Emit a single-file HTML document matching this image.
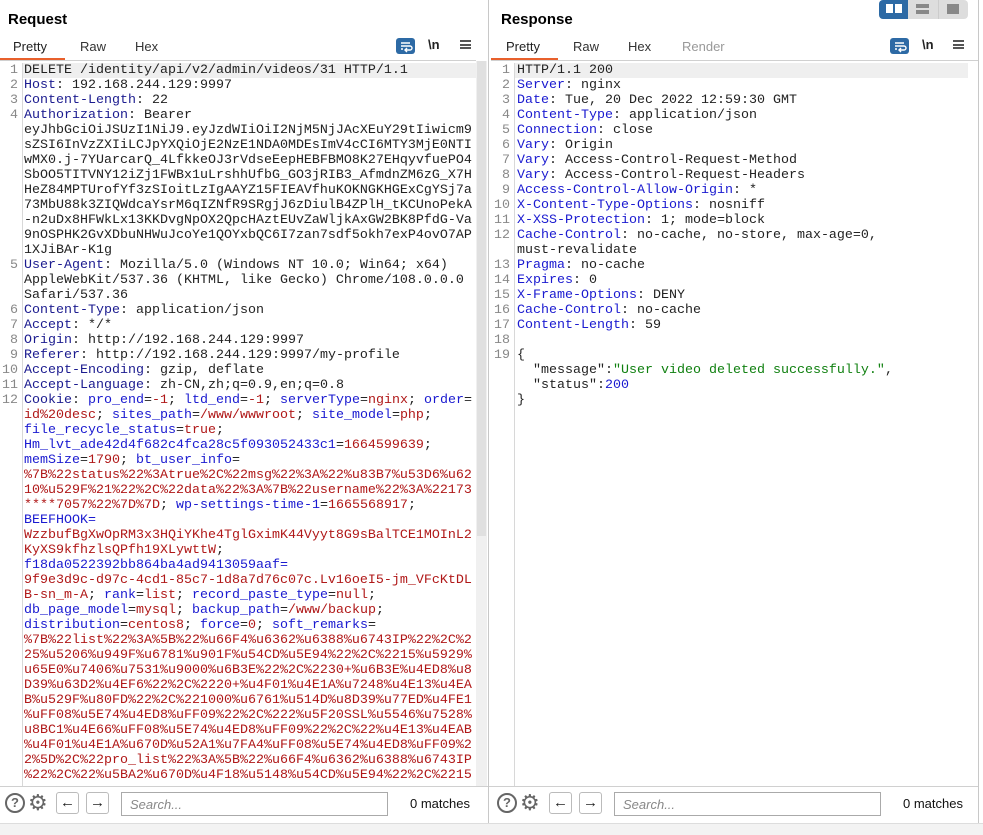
<!DOCTYPE html>
<html><head><meta charset="utf-8"><style>
*{margin:0;padding:0;box-sizing:border-box}
html,body{width:983px;height:835px;overflow:hidden}
body{background:#fff;font-family:"Liberation Sans",sans-serif;position:relative}
.title{position:absolute;top:11px;font-weight:bold;font-size:15px;color:#000}
.tab{position:absolute;top:39px;font-size:13px;color:#333}
.ul{position:absolute;top:58px;height:2px;background:#e8602c}
.sep{position:absolute;top:60px;height:1px;background:#d0d0d0}
.code{position:absolute;top:63px;height:723px;overflow:hidden;font-family:"Liberation Mono",monospace;font-size:13.33px;line-height:15px;color:#222}
.code div{height:15px;white-space:pre}
.gut{position:absolute;top:63px;font-family:"Liberation Mono",monospace;font-size:13.33px;line-height:15px;color:#888;text-align:right;white-space:pre}
.k{color:#1b1b8f}.n{color:#1a1ad0}.v{color:#b01818}.g{color:#108010}.b{color:#1a1ad0}
.vl{position:absolute;width:1px;background:#d8d8d8}
.hl{position:absolute;top:63px;height:15px;background:#efefef}
.icon{position:absolute;width:19px;height:16px;border-radius:3px;background:#2d6aa5;top:38px}
.nl{position:absolute;top:37px;font-size:13px;font-weight:bold;color:#222}
.menu{position:absolute;top:40px;width:11px;height:9px;border-top:2px solid #555;border-bottom:2px solid #555}
.menu:after{content:"";position:absolute;left:0;right:0;top:1.5px;height:2px;background:#555}
.bar{position:absolute;top:786px;height:37px;border-top:1px solid #d0d0d0;background:#fff}
.btn{position:absolute;top:792px;width:23px;height:22px;border:1px solid #bbb;border-radius:3px;font-size:15px;text-align:center;line-height:20px;color:#222}
.search{position:absolute;top:792px;height:24px;border:1px solid #aaa;font-style:italic;font-size:13px;color:#888;padding:4px 8px}
.m{position:absolute;top:796px;font-size:13px;color:#111}
.circ{position:absolute;top:793px;width:20px;height:20px;border:2px solid #666;border-radius:50%;font-size:13px;font-weight:bold;color:#666;text-align:center;line-height:16px}
</style></head><body>
<div class="title" style="left:8px">Request</div>
<div class="title" style="left:501px">Response</div>

<div style="position:absolute;left:879px;top:0;width:29px;height:19px;background:#2d6aa5;border-radius:4px 0 0 4px"></div>
<div style="position:absolute;left:886px;top:4px;width:7px;height:9px;background:#fff"></div>
<div style="position:absolute;left:895px;top:4px;width:7px;height:9px;background:#fff"></div>
<div style="position:absolute;left:908px;top:0;width:30px;height:19px;background:#ddd"></div>
<div style="position:absolute;left:916px;top:4px;width:13px;height:4px;background:#888"></div>
<div style="position:absolute;left:916px;top:10px;width:13px;height:4px;background:#888"></div>
<div style="position:absolute;left:938px;top:0;width:30px;height:19px;background:#ddd;border-radius:0 4px 4px 0;border-left:1px solid #ccc"></div>
<div style="position:absolute;left:947px;top:4px;width:12px;height:10px;background:#888"></div>

<div class="tab" style="left:13px;color:#222">Pretty</div>
<div class="tab" style="left:80px">Raw</div>
<div class="tab" style="left:135px">Hex</div>
<div class="ul" style="left:0;width:65px"></div>
<div class="sep" style="left:0;width:476px"></div>
<div class="icon" style="left:396px"><svg width="19" height="16"><path d="M5 5h9M5 8h9a2 2 0 0 1 0 4h-4M11 10l-2 2 2 2M5 11h2" stroke="#fff" stroke-width="1.4" fill="none"/></svg></div>
<div class="nl" style="left:428px">\n</div>
<div class="menu" style="left:460px"></div>

<div class="tab" style="left:506px;color:#222">Pretty</div>
<div class="tab" style="left:573px">Raw</div>
<div class="tab" style="left:628px">Hex</div>
<div class="tab" style="left:682px;color:#999">Render</div>
<div class="ul" style="left:491px;width:67px"></div>
<div class="sep" style="left:491px;width:487px"></div>
<div class="icon" style="left:890px"><svg width="19" height="16"><path d="M5 5h9M5 8h9a2 2 0 0 1 0 4h-4M11 10l-2 2 2 2M5 11h2" stroke="#fff" stroke-width="1.4" fill="none"/></svg></div>
<div class="nl" style="left:922px">\n</div>
<div class="menu" style="left:953px"></div>

<div class="vl" style="left:488px;top:0;height:823px;background:#c8c8c8"></div>
<div class="vl" style="left:978px;top:0;height:823px;background:#c8c8c8"></div>
<div class="vl" style="left:22px;top:63px;height:723px"></div>
<div class="vl" style="left:514px;top:63px;height:723px"></div>
<div style="position:absolute;left:476px;top:61px;width:11px;height:725px;background:#f0f0f0"></div>
<div style="position:absolute;left:477px;top:61px;width:9px;height:475px;background:#e0e0e0"></div>
<div class="hl" style="left:23px;width:453px"></div>
<div class="hl" style="left:515px;width:453px"></div>

<div class="gut" style="left:0;width:18px">1
2
3
4









5


6
7
8
9
10
11
12</div>
<div class="code" style="left:24px;width:452px"><div>DELETE /identity/api/v2/admin/videos/31 HTTP/1.1</div><div><span class="k">Host</span>: 192.168.244.129:9997</div><div><span class="k">Content-Length</span>: 22</div><div><span class="k">Authorization</span>: Bearer</div><div>eyJhbGciOiJSUzI1NiJ9.eyJzdWIiOiI2NjM5NjJAcXEuY29tIiwicm9</div><div>sZSI6InVzZXIiLCJpYXQiOjE2NzE1NDA0MDEsImV4cCI6MTY3MjE0NTI</div><div>wMX0.j-7YUarcarQ_4LfkkeOJ3rVdseEepHEBFBMO8K27EHqyvfuePO4</div><div>SbOO5TITVNY12iZj1FWBx1uLrshhUfbG_GO3jRIB3_AfmdnZM6zG_X7H</div><div>HeZ84MPTUrofYf3zSIoitLzIgAAYZ15FIEAVfhuKOKNGKHGExCgYSj7a</div><div>73MbU88k3ZIQWdcaYsrM6qIZNfR9SRgjJ6zDiulB4ZPlH_tKCUnoPekA</div><div>-n2uDx8HFWkLx13KKDvgNpOX2QpcHAztEUvZaWljkAxGW2BK8PfdG-Va</div><div>9nOSPHK2GvXDbuNHWuJcoYe1QOYxbQC6I7zan7sdf5okh7exP4ovO7AP</div><div>1XJiBAr-K1g</div><div><span class="k">User-Agent</span>: Mozilla/5.0 (Windows NT 10.0; Win64; x64)</div><div>AppleWebKit/537.36 (KHTML, like Gecko) Chrome/108.0.0.0</div><div>Safari/537.36</div><div><span class="k">Content-Type</span>: application/json</div><div><span class="k">Accept</span>: */*</div><div><span class="k">Origin</span>: http://192.168.244.129:9997</div><div><span class="k">Referer</span>: http://192.168.244.129:9997/my-profile</div><div><span class="k">Accept-Encoding</span>: gzip, deflate</div><div><span class="k">Accept-Language</span>: zh-CN,zh;q=0.9,en;q=0.8</div><div><span class="k">Cookie</span>: <span class="n">pro_end</span>=<span class="v">-1</span>; <span class="n">ltd_end</span>=<span class="v">-1</span>; <span class="n">serverType</span>=<span class="v">nginx</span>; <span class="n">order</span>=</div><div><span class="v">id%20desc</span>; <span class="n">sites_path</span>=<span class="v">/www/wwwroot</span>; <span class="n">site_model</span>=<span class="v">php</span>;</div><div><span class="n">file_recycle_status</span>=<span class="v">true</span>;</div><div><span class="n">Hm_lvt_ade42d4f682c4fca28c5f093052433c1</span>=<span class="v">1664599639</span>;</div><div><span class="n">memSize</span>=<span class="v">1790</span>; <span class="n">bt_user_info</span>=</div><div class="v">%7B%22status%22%3Atrue%2C%22msg%22%3A%22%u83B7%u53D6%u62</div><div class="v">10%u529F%21%22%2C%22data%22%3A%7B%22username%22%3A%22173</div><div><span class="v">****7057%22%7D%7D</span>; <span class="n">wp-settings-time-1</span>=<span class="v">1665568917</span>;</div><div class="n">BEEFHOOK=</div><div><span class="v">WzzbufBgXwOpRM3x3HQiYKhe4TglGximK44Vyyt8G9sBalTCE1MOInL2</span></div><div><span class="v">KyXS9kfhzlsQPfh19XLywttW</span>;</div><div class="n">f18da0522392bb864ba4ad9413059aaf=</div><div class="v">9f9e3d9c-d97c-4cd1-85c7-1d8a7d76c07c.Lv16oeI5-jm_VFcKtDL</div><div><span class="v">B-sn_m-A</span>; <span class="n">rank</span>=<span class="v">list</span>; <span class="n">record_paste_type</span>=<span class="v">null</span>;</div><div><span class="n">db_page_model</span>=<span class="v">mysql</span>; <span class="n">backup_path</span>=<span class="v">/www/backup</span>;</div><div><span class="n">distribution</span>=<span class="v">centos8</span>; <span class="n">force</span>=<span class="v">0</span>; <span class="n">soft_remarks</span>=</div><div class="v">%7B%22list%22%3A%5B%22%u66F4%u6362%u6388%u6743IP%22%2C%2</div><div class="v">25%u5206%u949F%u6781%u901F%u54CD%u5E94%22%2C%2215%u5929%</div><div class="v">u65E0%u7406%u7531%u9000%u6B3E%22%2C%2230+%u6B3E%u4ED8%u8</div><div class="v">D39%u63D2%u4EF6%22%2C%2220+%u4F01%u4E1A%u7248%u4E13%u4EA</div><div class="v">B%u529F%u80FD%22%2C%221000%u6761%u514D%u8D39%u77ED%u4FE1</div><div class="v">%uFF08%u5E74%u4ED8%uFF09%22%2C%222%u5F20SSL%u5546%u7528%</div><div class="v">u8BC1%u4E66%uFF08%u5E74%u4ED8%uFF09%22%2C%22%u4E13%u4EAB</div><div class="v">%u4F01%u4E1A%u670D%u52A1%u7FA4%uFF08%u5E74%u4ED8%uFF09%2</div><div class="v">2%5D%2C%22pro_list%22%3A%5B%22%u66F4%u6362%u6388%u6743IP</div><div class="v">%22%2C%22%u5BA2%u670D%u4F18%u5148%u54CD%u5E94%22%2C%2215</div></div>

<div class="gut" style="left:490px;width:20px">1
2
3
4
5
6
7
8
9
10
11
12

13
14
15
16
17
18
19</div>
<div class="code" style="left:517px;width:460px"><div>HTTP/1.1 200</div><div><span class="b">Server</span>: nginx</div><div><span class="b">Date</span>: Tue, 20 Dec 2022 12:59:30 GMT</div><div><span class="b">Content-Type</span>: application/json</div><div><span class="b">Connection</span>: close</div><div><span class="b">Vary</span>: Origin</div><div><span class="b">Vary</span>: Access-Control-Request-Method</div><div><span class="b">Vary</span>: Access-Control-Request-Headers</div><div><span class="b">Access-Control-Allow-Origin</span>: *</div><div><span class="b">X-Content-Type-Options</span>: nosniff</div><div><span class="b">X-XSS-Protection</span>: 1; mode=block</div><div><span class="b">Cache-Control</span>: no-cache, no-store, max-age=0,</div><div>must-revalidate</div><div><span class="b">Pragma</span>: no-cache</div><div><span class="b">Expires</span>: 0</div><div><span class="b">X-Frame-Options</span>: DENY</div><div><span class="b">Cache-Control</span>: no-cache</div><div><span class="b">Content-Length</span>: 59</div><div></div><div>{</div><div>  "message":<span class="g">"User video deleted successfully."</span>,</div><div>  "status":<span class="b">200</span></div><div>}</div></div>

<div class="bar" style="left:0;width:488px"></div>
<div class="bar" style="left:489px;width:489px"></div>
<div class="circ" style="left:5px">?</div>
<div style="position:absolute;left:28px;top:792px;font-size:22px;line-height:22px;color:#666">⚙</div>
<div class="btn" style="left:56px">←</div>
<div class="btn" style="left:86px">→</div>
<div class="search" style="left:121px;width:267px">Search...</div>
<div class="m" style="left:410px">0 matches</div>
<div class="circ" style="left:497px">?</div>
<div style="position:absolute;left:520px;top:792px;font-size:22px;line-height:22px;color:#666">⚙</div>
<div class="btn" style="left:549px">←</div>
<div class="btn" style="left:579px">→</div>
<div class="search" style="left:614px;width:267px">Search...</div>
<div class="m" style="left:903px">0 matches</div>
<div style="position:absolute;left:0;top:823px;width:983px;height:12px;background:#f3f3f3;border-top:1px solid #ddd"></div>
</body></html>
